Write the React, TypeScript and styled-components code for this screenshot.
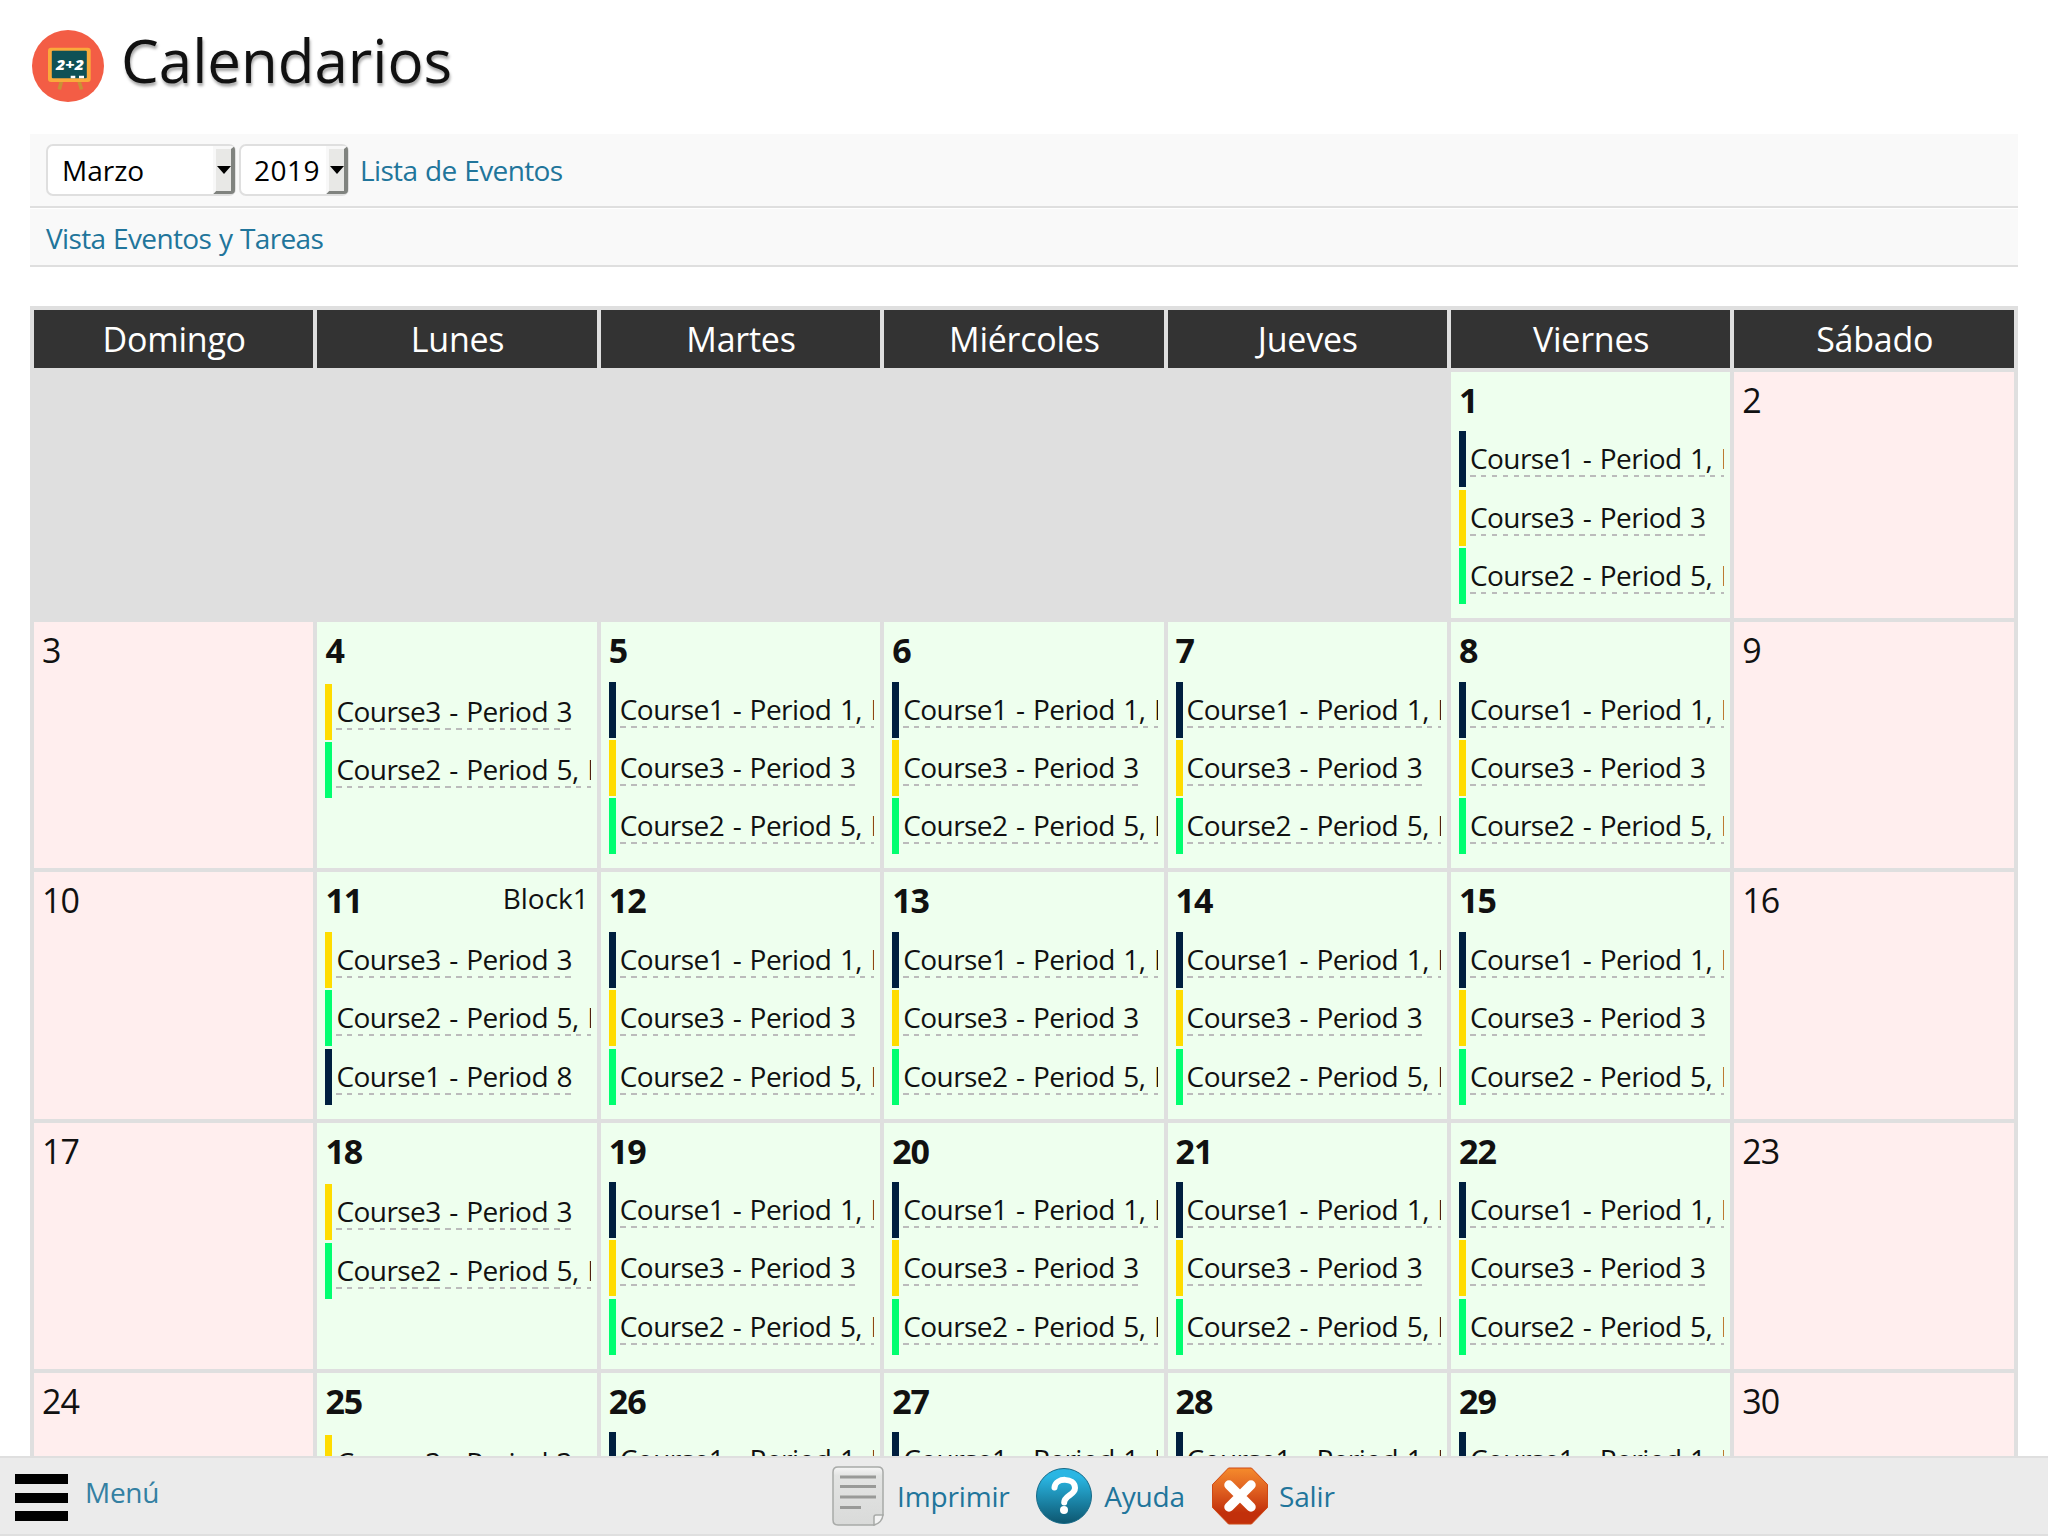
import React from "react";
import styled, { createGlobalStyle } from "styled-components";

const GlobalStyle = createGlobalStyle`
  * { box-sizing: border-box; }
  html, body { margin: 0; height: 1536px; overflow: hidden; background: #fff; }
  body { font-family: "Open Sans", "Noto Sans", sans-serif; font-size: 28px; color: #111; }
`;

const Page = styled.div`
  height: 1536px;
  display: flex;
  flex-direction: column;
`;
const Content = styled.main`
  flex: 1;
  min-height: 0;
  overflow: hidden;
  padding: 0 30px;
`;
const Heading = styled.header`
  height: 134px;
  padding: 30px 0 0 2px;
  display: flex;
  gap: 17px;
`;
const Title = styled.h1`
  margin: -11px 0 0;
  font-size: 60px;
  line-height: 82px;
  height: 82px;
  font-weight: 400;
  text-shadow: 1px 3px 3px rgba(0, 0, 0, 0.35);
`;
const Bar = styled.div<{ $height: number }>`
  height: ${(p) => p.$height}px;
  display: flex;
  align-items: center;
  padding-left: 16px;
  background: #f9f9f9;
  border-bottom: 2px solid #dfdfdf;
  & + & { margin-top: 1px; padding-top: 2px; }
`;
const Link = styled.a`
  color: #21759b;
  line-height: 38px;
  white-space: nowrap;
`;
const BarLink = styled(Link)`
  letter-spacing: -0.65px;
  word-spacing: 1.1px;
`;
const Select = styled.div<{ $width: number }>`
  width: ${(p) => p.$width}px;
  height: 52px;
  margin-right: 3px;
  padding-left: 14px;
  display: flex;
  align-items: center;
  justify-content: space-between;
  background: #fff;
  border: 2px solid #dfdfdf;
  border-radius: 7px;
  color: #000;
  & + & { padding-left: 13px; margin-right: 11px; letter-spacing: 0.5px; }
`;
const Arrow = styled.span`
  width: 22px;
  height: 48px;
  margin-right: -1px;
  display: flex;
  align-items: center;
  justify-content: center;
  background: #e8e8e6;
  border: solid;
  border-width: 3px 4px 3px 3px;
  border-color: #f8f8f8 #80837f #80837f #f8f8f8;
  border-radius: 0 4px 4px 0;
  &::after {
    content: "";
    border: 7px solid transparent;
    border-top: 8px solid #000;
    border-bottom: 0;
  }
`;
const Calendar = styled.section`
  margin-top: 39px;
  padding: 4px;
  display: grid;
  grid-template-columns: repeat(6, 279.4px) minmax(0, 1fr);
  grid-template-rows: 58px;
  grid-auto-rows: 246.2px;
  gap: 4px;
  background: #dfdfdf;
`;
const Weekday = styled.div`
  background: #333;
  color: #fff;
  font-size: 34px;
  line-height: 58px;
  letter-spacing: -0.25px;
  padding-left: 1px;
  text-align: center;
`;
const Cell = styled.div<{ $kind: "empty" | "off" | "school" }>`
  padding: 5px 6px 0 8px;
  overflow: hidden;
  background: ${(p) => ({ empty: "#dfdfdf", off: "#fee", school: "#efe" })[p.$kind]};
`;
const DayHead = styled.div`
  display: flex;
  justify-content: space-between;
  height: 48px;
  padding-right: 2px;
`;
const DayNumber = styled.span<{ $bold: boolean }>`
  font-size: 34px;
  line-height: ${(p) => (p.$bold ? 46.4 : 47.2)}px;
  letter-spacing: -1px;
  font-weight: ${(p) => (p.$bold ? 700 : 400)};
`;
const Block = styled.span`
  line-height: 43px;
`;
const Events = styled.div<{ $offset: number }>`
  padding-top: ${(p) => p.$offset}px;
  display: flex;
  flex-direction: column;
  gap: 2.4px;
`;
const Event = styled.div<{ $color: string }>`
  height: 56px;
  border-left: 7px solid ${(p) => p.$color};
  padding: 7px 0 0 4px;
  display: flex;
  overflow: hidden;
  white-space: nowrap;
`;
const EventTitle = styled.span`
  height: 39px;
  line-height: 41px;
  letter-spacing: -0.55px;
  word-spacing: 1.8px;
  background: repeating-linear-gradient(90deg, #bbb 0 5.6px, transparent 5.6px 10.9px) left bottom / 100% 2px no-repeat;
`;
const Footer = styled.footer`
  height: 80px;
  display: flex;
  background: #ebebeb;
  border-top: 2px solid #dfdfdf;
  border-bottom: 2px solid #dfdfdf;
`;
const MenuLink = styled(Link)`
  width: 832px;
  display: flex;
  gap: 17px;
  padding: 16px 0 0 15px;
`;
const MenuLabel = styled.span`
  margin-top: -1px;
  letter-spacing: -0.3px;
  opacity: 0.9;
`;
const MenuIcon = styled.span`
  width: 53px;
  height: 47px;
  display: flex;
  flex-direction: column;
  justify-content: space-between;
`;
const MenuLine = styled.span`
  height: 10px;
  background: #000;
`;
const Tool = styled(Link)<{ $gap: number; $after: number }>`
  display: flex;
  align-items: center;
  gap: ${(p) => p.$gap}px;
  margin-right: ${(p) => p.$after}px;
  letter-spacing: -0.15px;
`;
const BoardText = styled.text`
  font-family: "Open Sans", sans-serif;
  font-size: 14px;
  font-weight: 800;
  font-style: italic;
`;

const BoardIcon = () => (
  <svg width="72" height="72" viewBox="0 0 72 72">
    <circle cx="36" cy="36" r="36" fill="#f35d45" />
    <path d="M29.500 51l-2.200 8.500M47 51l2.500 8.500" stroke="#c99135" strokeWidth="3.600" />
    <rect x="16" y="17.800" width="42.700" height="34.200" rx="3" fill="#faa93b" />
    <rect x="19.800" y="20.800" width="35" height="27.400" rx="1" fill="#0f5156" />
    <BoardText x="24" y="39.500" textLength="28" lengthAdjust="spacingAndGlyphs" fill="#fff">2+2</BoardText>
    <path d="M38.700 47h4.600M47 47h5" stroke="#fff" strokeWidth="2.400" />
  </svg>
);
const PrintIcon = () => (
  <svg width="52" height="60" viewBox="0 0 52 60">
    <defs>
      <linearGradient id="paper" x1="0" y1="0" x2="0" y2="1">
        <stop offset="0" stopColor="#f6f6f6" />
        <stop offset=".15" stopColor="#e3e4e3" />
        <stop offset="1" stopColor="#d9dad9" />
      </linearGradient>
    </defs>
    <path d="M6 1h40q5 0 5 5v43L42 59H6q-5 0-5-5V6q0-5 5-5z" fill="url(#paper)" stroke="#a8aaa8" strokeWidth="1.500" />
    <path d="M42 59v-8q0-2 2-2h7q-1 8-9 10z" fill="#f4f4f4" stroke="#a8aaa8" strokeWidth="1.500" />
    <path d="M8 11h36M8 20.500h36M8 31h36M8 41.500h21" stroke="#999a98" strokeWidth="2.800" />
  </svg>
);
const HelpIcon = () => (
  <svg width="56" height="56" viewBox="0 0 56 56">
    <defs>
      <linearGradient id="help" x1="0" y1="0" x2="0" y2="1">
        <stop offset=".15" stopColor="#2ab6e3" />
        <stop offset="1" stopColor="#0d566f" />
      </linearGradient>
    </defs>
    <circle cx="28" cy="28" r="27.500" fill="url(#help)" stroke="#176a88" />
    <path d="M18.500 19.500c1-10.500 20.500-10 20.500.5 0 7-10.800 7.500-10.800 14.500" fill="none" stroke="#fff" strokeWidth="6" strokeLinecap="round" />
    <circle cx="28" cy="42" r="4" fill="#fff" />
  </svg>
);
const ExitIcon = () => (
  <svg width="56" height="58" viewBox="0 0 56 58">
    <defs>
      <linearGradient id="exit" x1="0" y1="0" x2="0" y2="1">
        <stop offset="0" stopColor="#f58b2c" />
        <stop offset=".4" stopColor="#df5f20" />
        <stop offset=".8" stopColor="#c2300b" />
      </linearGradient>
    </defs>
    <path d="M16.500 1h23L55.500 17.500v23L39.500 57h-23L.5 40.500v-23z" fill="url(#exit)" stroke="#ce4814" strokeLinejoin="round" />
    <path d="M17 18l22 22M39 18L17 40" stroke="#fff" strokeWidth="9.500" strokeLinecap="round" />
  </svg>
);

const COLORS: Record<string, string> = { Course1: "#001f3f", Course2: "#01ff70", Course3: "#ffdc00" };
const TUE_FRI = ["Course1 - Period 1, Period 2", "Course3 - Period 3", "Course2 - Period 5, Period 6"];
const MONDAY = ["Course3 - Period 3", "Course2 - Period 5, Period 6"];
const WEEKDAYS = ["Domingo", "Lunes", "Martes", "Miércoles", "Jueves", "Viernes", "Sábado"];

const eventsFor = (day: number, column: number) => {
  if (column === 0 || column === 6) return [];
  if (column !== 1) return TUE_FRI;
  return day === 11 ? [...MONDAY, "Course1 - Period 8"] : MONDAY;
};

function Day({ day, column }: { day: number; column: number }) {
  if (day < 1 || day > 31) return <Cell $kind="empty" />;
  const events = eventsFor(day, column);
  const school = events.length > 0;
  return (
    <Cell $kind={school ? "school" : "off"}>
      <DayHead>
        <DayNumber $bold={school}>{day}</DayNumber>
        {day === 11 && <Block>Block1</Block>}
      </DayHead>
      <Events $offset={events.length === 2 ? 8.9 : 6.4}>
        {events.map((title) => (
          <Event key={title} $color={COLORS[title.slice(0, 7)]}>
            <EventTitle>{title}</EventTitle>
          </Event>
        ))}
      </Events>
    </Cell>
  );
}

export default function App() {
  return (
    <Page>
      <GlobalStyle />
      <Content>
        <Heading>
          <BoardIcon />
          <Title>Calendarios</Title>
        </Heading>
        <Bar $height={74}>
          <Select $width={190}>Marzo<Arrow /></Select>
          <Select $width={110}>2019<Arrow /></Select>
          <BarLink>Lista de Eventos</BarLink>
        </Bar>
        <Bar $height={58}>
          <BarLink>Vista Eventos y Tareas</BarLink>
        </Bar>
        <Calendar>
          {WEEKDAYS.map((name) => <Weekday key={name}>{name}</Weekday>)}
          {Array.from({ length: 35 }, (_, i) => <Day key={i} day={i - 4} column={i % 7} />)}
        </Calendar>
      </Content>
      <Footer>
        <MenuLink>
          <MenuIcon><MenuLine /><MenuLine /><MenuLine /></MenuIcon>
          <MenuLabel>Menú</MenuLabel>
        </MenuLink>
        <Tool $gap={13} $after={26.5}><PrintIcon />Imprimir</Tool>
        <Tool $gap={12} $after={27}><HelpIcon />Ayuda</Tool>
        <Tool $gap={11} $after={0}><ExitIcon />Salir</Tool>
      </Footer>
    </Page>
  );
}
